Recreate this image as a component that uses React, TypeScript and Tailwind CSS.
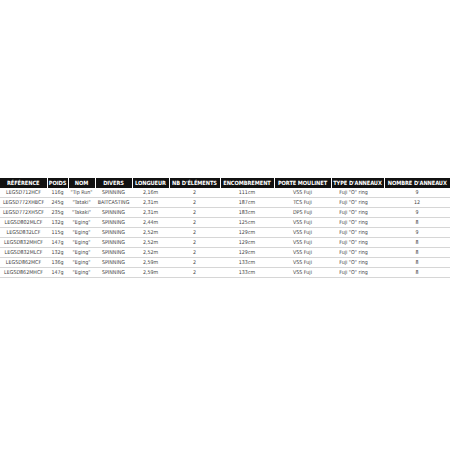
import React from "react";

const headers = [
  "RÉFÉRENCE",
  "POIDS",
  "NOM",
  "DIVERS",
  "LONGUEUR",
  "NB D'ÉLÉMENTS",
  "ENCOMBREMENT",
  "PORTE MOULINET",
  "TYPE D'ANNEAUX",
  "NOMBRE D'ANNEAUX",
];

const widths = [47, 21, 27, 37, 37, 51, 54, 57, 53, 66];

const rows = [
  ["LEGSD712HCF", "116g", "\"Tip Run\"", "SPINNING", "2,16m", "2", "111cm", "VSS Fuji", "Fuji \"O\" ring", "9"],
  ["LEGSD772XHBCF", "245g", "\"Tataki\"", "BAITCASTING", "2,31m", "2", "187cm", "TCS Fuji", "Fuji \"O\" ring", "12"],
  ["LEGSD772XHSCF", "235g", "\"Takaki\"", "SPINNING", "2,31m", "2", "183cm", "DPS Fuji", "Fuji \"O\" ring", "9"],
  ["LEGSD802MLCF", "132g", "\"Eging\"", "SPINNING", "2,44m", "2", "125cm", "VSS Fuji", "Fuji \"O\" ring", "8"],
  ["LEGSD832LCF", "115g", "\"Eging\"", "SPINNING", "2,52m", "2", "129cm", "VSS Fuji", "Fuji \"O\" ring", "9"],
  ["LEGSD832MHCF", "147g", "\"Eging\"", "SPINNING", "2,52m", "2", "129cm", "VSS Fuji", "Fuji \"O\" ring", "8"],
  ["LEGSD832MLCF", "132g", "\"Eging\"", "SPINNING", "2,52m", "2", "129cm", "VSS Fuji", "Fuji \"O\" ring", "8"],
  ["LEGSD862MCF", "136g", "\"Eging\"", "SPINNING", "2,59m", "2", "133cm", "VSS Fuji", "Fuji \"O\" ring", "8"],
  ["LEGSD862MHCF", "147g", "\"Eging\"", "SPINNING", "2,59m", "2", "133cm", "VSS Fuji", "Fuji \"O\" ring", "8"],
];

export default function App() {
  return (
    <div className="w-[452px] h-[452px] bg-white flex flex-col pt-[178px] font-['DejaVu_Sans_Condensed','Liberation_Sans_Narrow','Liberation_Sans',sans-serif]">
      <table className="table-fixed border-collapse w-[450px]">
        <colgroup>
          {widths.map((w, i) => (
            <col key={i} style={{ width: w }} />
          ))}
        </colgroup>
        <thead>
          <tr className="h-[10px] bg-[#111111]">
            {headers.map((h, i) => (
              <th
                key={i}
                className="p-0 text-[5.7px] tracking-[-0.1px] leading-[10px] font-bold text-white text-center whitespace-nowrap overflow-hidden border-l border-white first:border-l-0"
              >
                {h}
              </th>
            ))}
          </tr>
        </thead>
        <tbody>
          {rows.map((r, ri) => (
            <tr key={ri} className="h-[9.33px] border-b border-[#d6d6d6]">
              {r.map((c, ci) => (
                <td
                  key={ci}
                  className={`p-0 text-[5.3px] leading-[9px] text-[#3f3f3f] text-center whitespace-nowrap overflow-hidden ${ci === 8 ? "pr-[8px]" : ""}`}
                >
                  {c}
                </td>
              ))}
            </tr>
          ))}
        </tbody>
      </table>
    </div>
  );
}
